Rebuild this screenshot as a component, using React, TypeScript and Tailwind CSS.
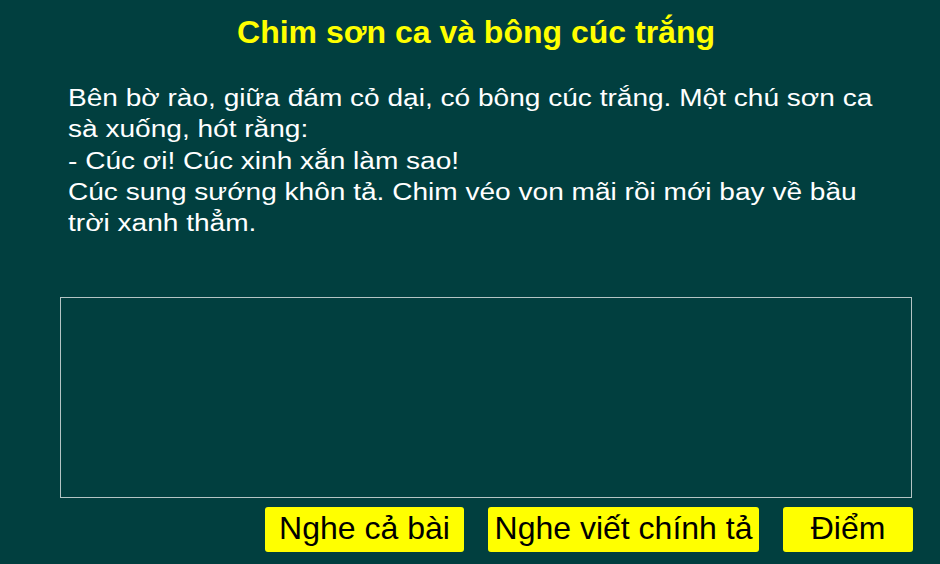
import React from "react";

export default function App() {
  return (
    <div
      className="w-[940px] h-[564px] bg-[#013f3f] flex flex-col"
      style={{ fontFamily: '"Liberation Sans", Arial, sans-serif' }}
    >
      <h1 className="text-[32px] font-bold text-[#ffff00] text-center pt-[13px] pl-[12px] leading-[38px]">
        Chim sơn ca và bông cúc trắng
      </h1>
      <div className="ml-[68px] mt-[32px] h-[157px]">
        <p className="w-[672px] origin-top-left scale-x-[1.22] text-[23px] leading-[31.3px] text-white">
          Bên bờ rào, giữa đám cỏ dại, có bông cúc trắng. Một chú sơn ca sà xuống, hót rằng:
          <br />- Cúc ơi! Cúc xinh xắn làm sao!
          <br />
          Cúc sung sướng khôn tả. Chim véo von mãi rồi mới bay về bầu trời xanh thẳm.
        </p>
      </div>
      <textarea className="ml-[60px] mt-[57px] w-[852px] h-[201px] border-[1.5px] border-[#b4c4c4] bg-transparent outline-none resize-none text-white" />
      <div className="flex justify-end gap-[24px] pr-[27px] mt-[9px]">
        <button className="h-[45px] w-[199px] pb-[3px] bg-[#ffff00] rounded-[3px] text-black text-[32px] leading-none flex items-center justify-center">
          Nghe cả bài
        </button>
        <button className="h-[45px] w-[271px] pb-[3px] bg-[#ffff00] rounded-[3px] text-black text-[32px] leading-none flex items-center justify-center">
          Nghe viết chính tả
        </button>
        <button className="h-[45px] w-[130px] pb-[3px] bg-[#ffff00] rounded-[3px] text-black text-[32px] leading-none flex items-center justify-center">
          Điểm
        </button>
      </div>
    </div>
  );
}
